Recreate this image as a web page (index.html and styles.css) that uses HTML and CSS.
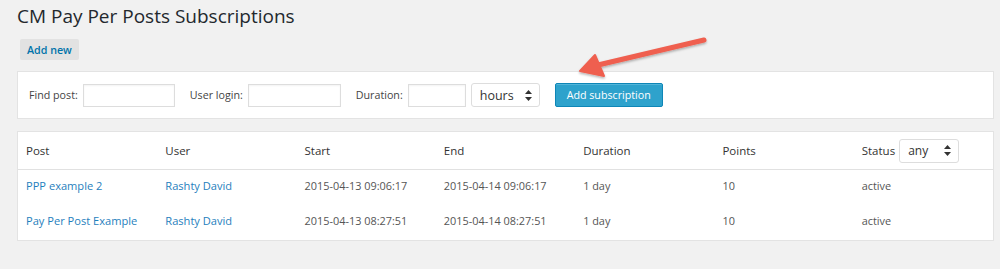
FILE: index.html
```html
<!DOCTYPE html>
<html>
<head>
<meta charset="utf-8">
<link rel="stylesheet" href="styles.css">
</head>
<body>
<div class="wrap">
  <h1 class="title">CM Pay Per Posts Subscriptions</h1>
  <div class="actions"><a class="btn-secondary">Add new</a></div>
  <div class="filter">
    <label class="lbl">Find post:</label><span class="input w92"></span>
    <label class="lbl gap">User login:</label><span class="input w93"></span>
    <label class="lbl gap">Duration:</label><span class="input w58"></span>
    <span class="select sel-hours">hours<svg class="updown" width="7" height="11" viewBox="0 0 7 11"><path d="M3.5 0 L7 4 L0 4 Z M0 7 L7 7 L3.5 11 Z" fill="#333"/></svg></span>
    <a class="btn-primary">Add subscription</a>
  </div>
  <div class="tablebox">
    <table class="subs">
      <thead>
        <tr><th>Post</th><th>User</th><th>Start</th><th>End</th><th>Duration</th><th>Points</th>
          <th><span class="status-h">Status <span class="select sel-any">any<svg class="updown" width="7" height="11" viewBox="0 0 7 11"><path d="M3.5 0 L7 4 L0 4 Z M0 7 L7 7 L3.5 11 Z" fill="#333"/></svg></span></span></th></tr>
      </thead>
      <tbody>
        <tr><td><a class="lnk">PPP example 2</a></td><td><a class="lnk">Rashty David</a></td><td>2015-04-13 09:06:17</td><td>2015-04-14 09:06:17</td><td>1 day</td><td class="num">10</td><td>active</td></tr>
        <tr><td><a class="lnk">Pay Per Post Example</a></td><td><a class="lnk">Rashty David</a></td><td>2015-04-13 08:27:51</td><td>2015-04-14 08:27:51</td><td>1 day</td><td class="num">10</td><td>active</td></tr>
      </tbody>
    </table>
  </div>
  <svg class="arrow" width="150" height="60" viewBox="0 0 150 60">
    <defs>
      <filter id="sh" x="-20%" y="-40%" width="140%" height="180%">
        <feDropShadow dx="0" dy="1.5" stdDeviation="1.2" flood-color="#000" flood-opacity="0.3"/>
      </filter>
    </defs>
    <g filter="url(#sh)" fill="#ef5f4f" stroke="#ef5f4f" stroke-linejoin="round" stroke-linecap="round">
      <line x1="136" y1="13" x2="30" y2="38" stroke-width="5"/>
      <path d="M12 44 L27 28 L36 49 Z" stroke-width="2"/>
    </g>
  </svg>
</div>
</body>
</html>
```

FILE: styles.css
```css
html, body {
  margin: 0;
  padding: 0;
  background: #f1f1f1;
}
body {
  font-family: "Open Sans", "Liberation Sans", sans-serif;
  color: #555;
  font-size: 11px;
}
.wrap {
  position: relative;
  padding: 4px 6px 0 17px;
}
.title {
  margin: 0;
  font-size: 19px;
  font-weight: 400;
  line-height: 24px;
  color: #23282d;
}
.actions {
  margin-top: 11px;
  display: flex;
}
.btn-secondary {
  display: inline-flex;
  align-items: center;
  height: 21px;
  padding: 0 7px;
  margin-left: 3px;
  background: #e2e2e2;
  color: #0073aa;
  font-weight: 600;
  font-size: 10.7px;
  border-radius: 2px;
}
.filter {
  margin-top: 11px;
  height: 46px;
  background: #fff;
  border: 1px solid #e3e3e3;
  display: flex;
  align-items: center;
  padding-left: 11px;
  box-sizing: content-box;
}
.lbl {
  color: #444;
  font-size: 10.7px;
  margin-right: 5px;
}
.lbl.gap { margin-left: 15px; }
.input {
  display: inline-block;
  height: 21px;
  border: 1px solid #ddd;
  background: #fff;
  box-shadow: inset 0 1px 2px rgba(0,0,0,0.05);
}
.w92 { width: 90px; }
.w93 { width: 91px; }
.w58 { width: 56px; }
.select {
  display: inline-flex;
  align-items: center;
  justify-content: space-between;
  height: 22px;
  border: 1px solid #ddd;
  border-radius: 3px;
  background: #fff;
  color: #333;
  font-size: 12.5px;
  padding: 0 7px 0 8px;
  box-sizing: content-box;
}
.sel-hours { width: 52px; margin-left: 5px; }
.sel-any { width: 43px; margin-left: 4px; font-size: 12px; }
.btn-primary {
  display: inline-flex;
  align-items: center;
  justify-content: center;
  height: 22px;
  width: 106px;
  margin-left: 15px;
  background: #2ea2cc;
  border: 1px solid #0e86b7;
  color: #fff;
  border-radius: 2px;
  font-size: 10.7px;
  box-shadow: inset 0 1px 0 rgba(120,200,230,0.5);
}
.tablebox {
  margin-top: 12px;
  background: #fff;
  border: 1px solid #e3e3e3;
}
.subs {
  width: 100%;
  table-layout: fixed;
  border-collapse: collapse;
}
.subs th {
  text-align: left;
  font-weight: 400;
  color: #333;
  font-size: 11.5px;
  height: 37px;
  padding: 0 0 0 8px;
  border-bottom: 1px solid #e1e1e1;
}
.subs td {
  height: 35px;
  padding: 0 0 4px 8px;
  box-sizing: border-box;
  color: #555;
  font-size: 10.9px;
}
.subs td.num { color: #555; }
.status-h {
  display: inline-flex;
  align-items: center;
}
.lnk {
  color: #1f80bd;
  font-weight: 400;
  font-size: 11.1px;
}
.arrow {
  position: absolute;
  left: 568px;
  top: 27px;
}
```
